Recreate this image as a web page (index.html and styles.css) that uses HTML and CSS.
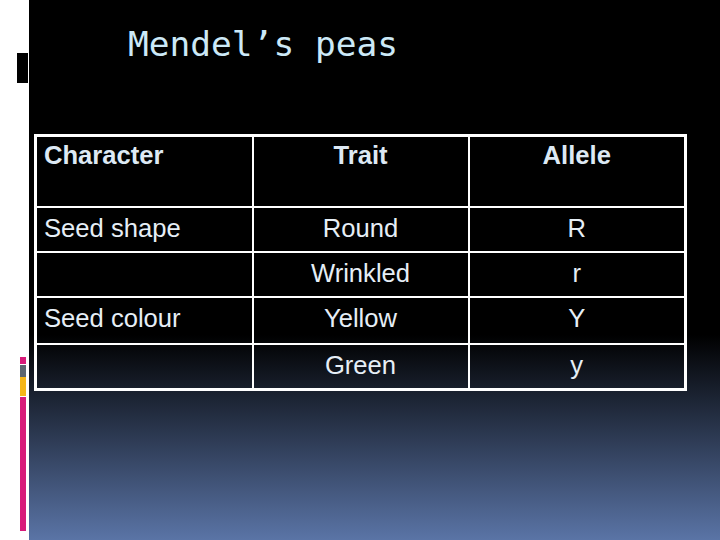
FILE: index.html
```html
<!DOCTYPE html>
<html>
<head>
<meta charset="utf-8">
<title>Mendel's peas</title>
<link rel="stylesheet" href="styles.css">
</head>
<body>
<div class="slide">
  <aside class="strip">
    <div class="mark"></div>
    <div class="bars">
      <div class="bar pink-s"></div>
      <div class="bar gray"></div>
      <div class="bar yellow"></div>
      <div class="bar pink-l"></div>
    </div>
  </aside>
  <main class="panel">
    <h1 class="title">Mendel’s peas</h1>
    <table class="peas">
      <colgroup>
        <col class="c1"><col class="c2"><col class="c3">
      </colgroup>
      <tr class="head">
        <th class="left">Character</th>
        <th>Trait</th>
        <th>Allele</th>
      </tr>
      <tr class="r1">
        <td class="left">Seed shape</td>
        <td>Round</td>
        <td>R</td>
      </tr>
      <tr class="r2">
        <td class="left"></td>
        <td>Wrinkled</td>
        <td>r</td>
      </tr>
      <tr class="r3">
        <td class="left">Seed colour</td>
        <td>Yellow</td>
        <td>Y</td>
      </tr>
      <tr class="r4">
        <td class="left"></td>
        <td>Green</td>
        <td>y</td>
      </tr>
    </table>
  </main>
</div>
</body>
</html>
```

FILE: styles.css
```css
html, body {
  margin: 0;
  padding: 0;
  width: 720px;
  height: 540px;
  overflow: hidden;
  background: #ffffff;
}

.slide {
  display: flex;
  width: 720px;
  height: 540px;
}

.strip {
  width: 29px;
  flex: none;
  display: flex;
  flex-direction: column;
  align-items: flex-end;
  background: #ffffff;
}

.mark {
  width: 11px;
  height: 30px;
  margin-top: 53px;
  margin-right: 1px;
  background: #000000;
}

.bars {
  display: flex;
  flex-direction: column;
  margin-top: 274px;
  margin-right: 3px;
}

.bar { width: 6px; }
.pink-s { height: 7px; background: #d81b7a; margin-bottom: 1px; }
.gray { height: 12px; background: #5c6670; }
.yellow { height: 19px; background: #f5b618; margin-bottom: 1px; }
.pink-l { height: 134px; background: #d81b7a; }

.panel {
  flex: 1;
  background: linear-gradient(to bottom, #000000 0%, #000000 62%, #5a74a6 100%);
  display: flex;
  flex-direction: column;
}

.title {
  margin: 24px 0 0 99px;
  font-family: "DejaVu Sans Mono", monospace;
  font-weight: normal;
  font-size: 34.5px;
  line-height: 40px;
  color: #cce9f7;
}

.peas {
  margin: 70px 0 0 5px;
  border-collapse: collapse;
  border: 3px solid #ffffff;
  font-family: "Liberation Sans", Arial, sans-serif;
  font-size: 25.6px;
  line-height: 28px;
  color: #e6eef6;
  table-layout: fixed;
  width: 652px;
}

.c1 { width: 217px; }
.c2 { width: 216px; }
.c3 { width: 217px; }

.peas th,
.peas td {
  border: 2px solid #ffffff;
  padding: 6px 6px 0 6px;
  vertical-align: top;
  text-align: center;
  white-space: nowrap;
  overflow: hidden;
}

.peas th {
  font-weight: bold;
  color: #dde9f4;
  padding-top: 4px;
}

.peas .left { text-align: left; padding-left: 7px; }

.head { height: 71px; }
.r1 { height: 45px; }
.r2 { height: 45px; }
.r3 { height: 47px; }
.r4 { height: 46px; }
```
